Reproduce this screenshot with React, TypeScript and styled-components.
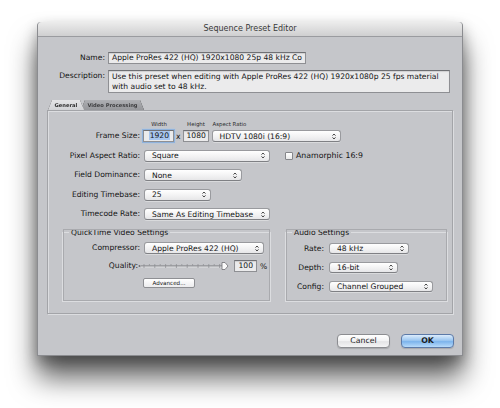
import styled, { createGlobalStyle } from "styled-components";

const GlobalStyle = createGlobalStyle`
  html, body {
    margin: 0;
    padding: 0;
    background: #ffffff;
  }
  body {
    font-family: "DejaVu Sans", "Liberation Sans", sans-serif;
    font-size: 7.6px;
    color: #141414;
  }
`;

const Stage = styled.div`
  width: 500px;
  height: 408px;
  box-sizing: border-box;
  padding: 22px 0 0 37px;
  overflow: hidden;
`;

const Window = styled.div`
  width: 426px;
  height: 334px;
  box-sizing: border-box;
  display: flex;
  flex-direction: column;
  background: #c5c6ca;
  border: 1px solid #8b8c90;
  border-top: none;
  border-radius: 4px 4px 0 0;
  box-shadow: 0 22px 28px rgba(0, 0, 0, 0.62), 0 6px 14px rgba(0, 0, 0, 0.3);
`;

const TitleBar = styled.div`
  height: 14px;
  line-height: 14px;
  text-align: center;
  font-size: 8px;
  color: #3a3a3a;
  background: linear-gradient(#ececec, #cfcfd0);
  border-bottom: 1px solid #9a9b9f;
  border-radius: 4px 4px 0 0;
`;

const Body = styled.div`
  flex: 1;
  display: flex;
  flex-direction: column;
  padding: 15px 9px 7px 9px;
`;

const Header = styled.div`
  display: grid;
  grid-template-columns: 58px 1fr;
  column-gap: 3px;
  row-gap: 6px;
  padding-right: 3px;
  align-items: start;
`;

const Label = styled.div<{ $w?: number }>`
  width: ${(p) => (p.$w ? `${p.$w}px` : "auto")};
  flex: none;
  text-align: right;
  line-height: 12px;
  white-space: nowrap;
`;

const Field = styled.div<{ $w?: number; $right?: boolean; $focus?: boolean }>`
  width: ${(p) => (p.$w ? `${p.$w}px` : "auto")};
  height: 12px;
  box-sizing: border-box;
  padding: 0 3px;
  line-height: 10px;
  text-align: ${(p) => (p.$right ? "right" : "left")};
  background: #ebebec;
  border: 1px solid #8e8f93;
  border-top-color: #6f7074;
  white-space: nowrap;
  overflow: hidden;
  box-shadow: ${(p) =>
    p.$focus ? "0 0 0 1px #8fb2dc, 0 0 2px 1px #a9c6ea" : "inset 0 1px 1px rgba(0,0,0,0.12)"};
`;

const DescField = styled(Field)`
  height: 23px;
  line-height: 10px;
  padding: 1px 3px;
  white-space: normal;
`;

const Selected = styled.span`
  background: #a8c6ee;
  padding: 0 1px;
`;

const TabBar = styled.div`
  display: flex;
  height: 10px;
  margin-top: 7px;
  padding-left: 1px;
  filter: drop-shadow(0 0 0.5px rgba(0, 0, 0, 0.8));
`;

const Tab = styled.div<{ $active?: boolean; $w: number }>`
  position: relative;
  width: ${(p) => p.$w}px;
  margin-left: ${(p) => (p.$active ? "0" : "-3px")};
  z-index: ${(p) => (p.$active ? 2 : 1)};
  font-size: 5.2px;
  font-weight: bold;
  line-height: 11px;
  text-align: center;
  color: ${(p) => (p.$active ? "#2e2e2e" : "#3e3e40")};
  &::before {
    content: "";
    position: absolute;
    inset: 0;
    z-index: -1;
    background: ${(p) =>
      p.$active ? "linear-gradient(#e4e4e6, #d2d3d6)" : "linear-gradient(#aeafb3, #96979b)"};
    clip-path: polygon(4px 0, calc(100% - 4px) 0, 100% 100%, 0 100%);
  }
`;

const Panel = styled.div`
  height: 204px;
  box-sizing: border-box;
  border: 1px solid #a3a4a8;
  box-shadow: inset 1px 1px 0 #dcdde0, 1px 1px 0 #dcdde0;
  padding: 10px 0 0 0;
  display: flex;
  flex-direction: column;
`;

const Rows = styled.div`
  display: flex;
  flex-direction: column;
  gap: 7.5px;
`;

const Row = styled.div<{ $gap?: number }>`
  display: flex;
  align-items: flex-end;
  gap: ${(p) => (p.$gap ?? 4)}px;
`;

const Stack = styled.div<{ $left?: boolean }>`
  display: flex;
  flex-direction: column;
  align-items: ${(p) => (p.$left ? "flex-start" : "center")};
`;

const Caption = styled.div`
  font-size: 5.4px;
  line-height: 7px;
  margin-bottom: 2px;
  color: #2a2a2a;
  padding-left: 1px;
`;

const Times = styled.span`
  line-height: 10px;
  margin: 0 -1px;
`;

const PopupBox = styled.div<{ $w: number; $h?: number }>`
  width: ${(p) => p.$w}px;
  height: ${(p) => p.$h ?? 12}px;
  box-sizing: border-box;
  display: flex;
  align-items: center;
  justify-content: space-between;
  padding: 0 4px 0 7px;
  background: linear-gradient(#ffffff, #f1f1f2 60%, #e6e6e8);
  border: 1px solid #999a9e;
  border-bottom-color: #7f8084;
  border-radius: 3px;
  white-space: nowrap;
  box-shadow: 0 1px 0 rgba(255, 255, 255, 0.35);
`;

const Arrows = () => (
  <svg width="4" height="7" viewBox="0 0 4 7">
    <path d="M0.5 2.6 L2 1 L3.5 2.6 M0.5 4.4 L2 6 L3.5 4.4" fill="none" stroke="#333" strokeWidth="0.9" />
  </svg>
);

const Popup = ({ w, h, children }: { w: number; h?: number; children: string }) => (
  <PopupBox $w={w} $h={h}>
    <span>{children}</span>
    <Arrows />
  </PopupBox>
);

const CheckWrap = styled.label`
  display: flex;
  align-items: center;
  gap: 3px;
  margin-left: 11px;
  line-height: 12px;
  font-size: 7.8px;
`;

const Check = styled.span`
  width: 8px;
  height: 8px;
  box-sizing: border-box;
  border: 1px solid #85868a;
  border-radius: 1px;
  background: linear-gradient(#ffffff, #e9e9ea);
`;

const Groups = styled.div`
  display: flex;
  gap: 14px;
  margin: 8px 0 0 14px;
`;

const Group = styled.fieldset<{ $w: number }>`
  width: ${(p) => p.$w}px;
  height: 74px;
  box-sizing: border-box;
  margin: 0;
  padding: 0;
  border: 1px solid #dcdde0;
  outline: 1px solid #a9aaae;
  outline-offset: -2px;
  min-width: 0;
`;

const Legend = styled.legend`
  margin-left: 6px;
  padding: 0 2px;
  line-height: 9px;
  font-size: 7.6px;
`;

const GroupRows = styled.div<{ $top: number; $gap: number }>`
  display: flex;
  flex-direction: column;
  gap: ${(p) => p.$gap}px;
  padding-top: ${(p) => p.$top}px;
`;

const GroupRow = styled.div<{ $gap?: number }>`
  display: flex;
  align-items: center;
  gap: ${(p) => (p.$gap ?? 4)}px;
`;

const SmallLabel = styled(Label)`
  line-height: 11px;
`;

const MiniButton = styled.div`
  width: 52px;
  height: 10px;
  box-sizing: border-box;
  margin-left: 80px;
  font-size: 5.6px;
  line-height: 8px;
  text-align: center;
  background: linear-gradient(#ffffff, #ececee);
  border: 1px solid #8e8f93;
  border-radius: 2px;
`;

const Footer = styled.div`
  margin-top: auto;
  margin-right: -1px;
  display: flex;
  justify-content: flex-end;
  gap: 11px;
`;

const Button = styled.div<{ $primary?: boolean }>`
  width: 53px;
  height: 14px;
  box-sizing: border-box;
  line-height: 12px;
  text-align: center;
  font-size: 7.8px;
  font-weight: ${(p) => (p.$primary ? "bold" : "normal")};
  color: #1c1c1c;
  border-radius: 4px;
  border: 1px solid ${(p) => (p.$primary ? "#5c7aa8" : "#8c8d91")};
  background: ${(p) =>
    p.$primary
      ? "linear-gradient(#dcecfc, #9cc7f1 45%, #7db4ec 55%, #b8dbfa)"
      : "linear-gradient(#ffffff, #f2f2f3 50%, #e4e4e6 55%, #f4f4f5)"};
  box-shadow: 0 1px 1px rgba(0, 0, 0, 0.15);
`;

const Slider = () => (
  <svg width="92" height="10" viewBox="0 0 92 10">
    <circle cx="1.5" cy="5" r="1" fill="#6a6a6e" />
    <line x1="3" y1="5" x2="86" y2="5" stroke="#77787c" strokeWidth="1" />
    <line x1="3" y1="6" x2="86" y2="6" stroke="#e6e6e8" strokeWidth="0.8" />
    {Array.from({ length: 15 }).map((_, i) => (
      <line key={i} x1={6 + i * 5.4} y1={3} x2={6 + i * 5.4} y2={i % 2 ? 4.5 : 7} stroke="#8a8b8f" strokeWidth="0.7" />
    ))}
    <path d="M84 1.5 h3 l3 3.5 l-3 3.5 h-3 z" fill="#fafafa" stroke="#6e6f73" strokeWidth="0.8" />
  </svg>
);

export default function App() {
  return (
    <>
      <GlobalStyle />
      <Stage>
        <Window>
          <TitleBar>Sequence Preset Editor</TitleBar>
          <Body>
            <Header>
              <Label>Name:</Label>
              <Field $w={198}>Apple ProRes 422 (HQ) 1920x1080 25p 48 kHz Co</Field>
              <Label>Description:</Label>
              <DescField>
                Use this preset when editing with Apple ProRes 422 (HQ) 1920x1080p 25 fps material with audio set to
                48 kHz.
              </DescField>
            </Header>

            <TabBar>
              <Tab $active $w={36}>General</Tab>
              <Tab $w={63}>Video Processing</Tab>
            </TabBar>

            <Panel>
              <Rows>
                <Row $gap={3}>
                  <Label $w={92}>Frame Size:</Label>
                  <Stack>
                    <Caption>Width</Caption>
                    <Field $w={31} $right $focus>
                      <Selected>1920</Selected>
                    </Field>
                  </Stack>
                  <Times>x</Times>
                  <Stack>
                    <Caption>Height</Caption>
                    <Field $w={26} $right>1080</Field>
                  </Stack>
                  <Stack $left>
                    <Caption>Aspect Ratio</Caption>
                    <Popup w={129}>HDTV 1080i (16:9)</Popup>
                  </Stack>
                </Row>
                <Row>
                  <Label $w={92}>Pixel Aspect Ratio:</Label>
                  <Popup w={126}>Square</Popup>
                  <CheckWrap>
                    <Check />
                    Anamorphic 16:9
                  </CheckWrap>
                </Row>
                <Row>
                  <Label $w={92}>Field Dominance:</Label>
                  <Popup w={98}>None</Popup>
                </Row>
                <Row>
                  <Label $w={92}>Editing Timebase:</Label>
                  <Popup w={67}>25</Popup>
                </Row>
                <Row>
                  <Label $w={92}>Timecode Rate:</Label>
                  <Popup w={126}>Same As Editing Timebase</Popup>
                </Row>
              </Rows>

              <Groups>
                <Group $w={209}>
                  <Legend>QuickTime Video Settings</Legend>
                  <GroupRows $top={5} $gap={6}>
                    <GroupRow>
                      <Label $w={77}>Compressor:</Label>
                      <Popup w={120}>Apple ProRes 422 (HQ)</Popup>
                    </GroupRow>
                    <GroupRow $gap={0}>
                      <Label $w={75}>Quality:</Label>
                      <Slider />
                      <Field $w={23} $right style={{ marginLeft: 4 }}>
                        100
                      </Field>
                      <span style={{ marginLeft: 3 }}>%</span>
                    </GroupRow>
                    <MiniButton>Advanced...</MiniButton>
                  </GroupRows>
                </Group>
                <Group $w={163}>
                  <Legend>Audio Settings</Legend>
                  <GroupRows $top={6} $gap={8}>
                    <GroupRow $gap={5}>
                      <SmallLabel $w={38}>Rate:</SmallLabel>
                      <Popup w={80} h={11}>48 kHz</Popup>
                    </GroupRow>
                    <GroupRow $gap={5}>
                      <SmallLabel $w={38}>Depth:</SmallLabel>
                      <Popup w={69} h={11}>16-bit</Popup>
                    </GroupRow>
                    <GroupRow $gap={5}>
                      <SmallLabel $w={38}>Config:</SmallLabel>
                      <Popup w={104} h={11}>Channel Grouped</Popup>
                    </GroupRow>
                  </GroupRows>
                </Group>
              </Groups>
            </Panel>

            <Footer>
              <Button>Cancel</Button>
              <Button $primary>OK</Button>
            </Footer>
          </Body>
        </Window>
      </Stage>
    </>
  );
}
